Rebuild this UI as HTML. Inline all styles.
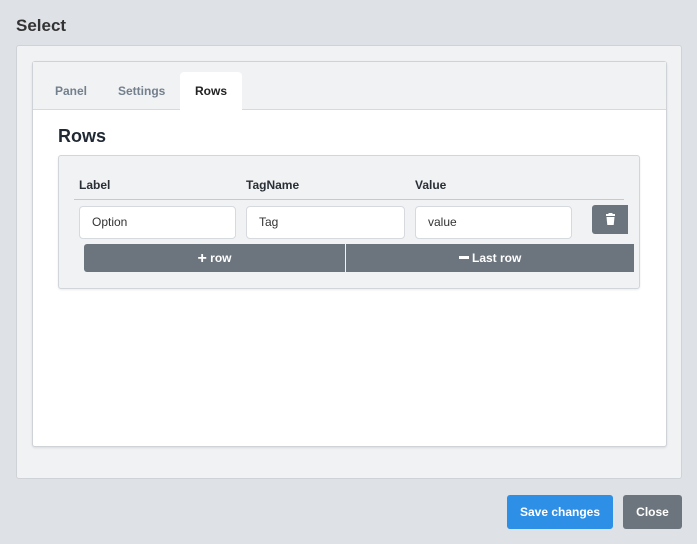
<!DOCTYPE html><html><head><style>
*{box-sizing:border-box;margin:0;padding:0}
body{width:697px;height:544px;background:#dee1e6;font-family:"Liberation Sans",sans-serif;position:relative;overflow:hidden}
.a{position:absolute}
.inp{position:absolute;top:206px;height:33px;background:#fff;border:1px solid #d6d9dd;border-radius:4px;font-size:12px;color:#333;padding:8px 12px}
.lbl{position:absolute;top:178px;font-size:12px;font-weight:bold;color:#2a2f36}
.btn{position:absolute;top:244px;height:28px;background:#6c757d;color:#fff;font-size:12px;font-weight:bold;text-align:center;line-height:28px}
</style></head><body>
<div class="a" style="left:16px;top:16px;font-size:17px;font-weight:bold;color:#333">Select</div>
<div class="a" style="left:16px;top:45px;width:666px;height:434px;background:#f1f2f4;border:1px solid #cfd2d6;border-radius:3px"></div>
<div class="a" style="left:32px;top:61px;width:635px;height:386px;background:#fff;border:1px solid #cfd2d6;border-radius:3px;box-shadow:0 1px 2px rgba(0,0,0,.1)"></div>
<div class="a" style="left:33px;top:62px;width:633px;height:48px;background:#f1f2f4;border-bottom:1px solid #d6d9dd"></div>
<div class="a" style="left:180px;top:72px;width:62px;height:39px;background:#fff;border-radius:4px 4px 0 0"></div>
<div class="a" style="left:55px;top:84px;font-size:12px;font-weight:bold;color:#737f8d">Panel</div>
<div class="a" style="left:118px;top:84px;font-size:12px;font-weight:bold;color:#737f8d">Settings</div>
<div class="a" style="left:195px;top:84px;font-size:12px;font-weight:bold;color:#222">Rows</div>
<div class="a" style="left:58px;top:126px;font-size:18px;font-weight:bold;color:#1f2833">Rows</div>
<div class="a" style="left:58px;top:155px;width:582px;height:134px;background:#f1f2f4;border:1px solid #d2d5d9;border-radius:3px;box-shadow:0 1px 2px rgba(0,0,0,.08)"></div>
<div class="lbl" style="left:79px">Label</div>
<div class="lbl" style="left:246px">TagName</div>
<div class="lbl" style="left:415px">Value</div>
<div class="a" style="left:74px;top:199px;width:550px;height:1px;background:#c6c9ce"></div>
<div class="inp" style="left:79px;width:157px">Option</div>
<div class="inp" style="left:246px;width:159px">Tag</div>
<div class="inp" style="left:415px;width:157px">value</div>
<div class="a" style="left:592px;top:205px;width:36px;height:29px;background:#6c757d;border-radius:3px 0 0 3px">
<svg width="36" height="29" viewBox="0 0 36 29"><rect x="14" y="9" width="9" height="2" fill="#fff"/><rect x="16.5" y="8" width="4" height="2" fill="#fff"/><path d="M14.5 12h8l-0.8 8h-6.4z" fill="#fff"/></svg></div>
<div class="btn" style="left:84px;width:261px;border-radius:3px 0 0 3px"><span style="font-size:16px;vertical-align:-1px">+</span> row</div>
<div class="btn" style="left:346px;width:288px"><span style="display:inline-block;width:10px;height:3px;background:#fff;vertical-align:3px"></span> Last row</div>
<div class="a" style="left:507px;top:495px;width:106px;height:34px;background:#2e8fe6;border-radius:3px;color:#fff;font-size:12px;font-weight:bold;text-align:center;line-height:34px">Save changes</div>
<div class="a" style="left:623px;top:495px;width:59px;height:34px;background:#6c757d;border-radius:3px;color:#fff;font-size:12px;font-weight:bold;text-align:center;line-height:34px">Close</div>
</body></html>
